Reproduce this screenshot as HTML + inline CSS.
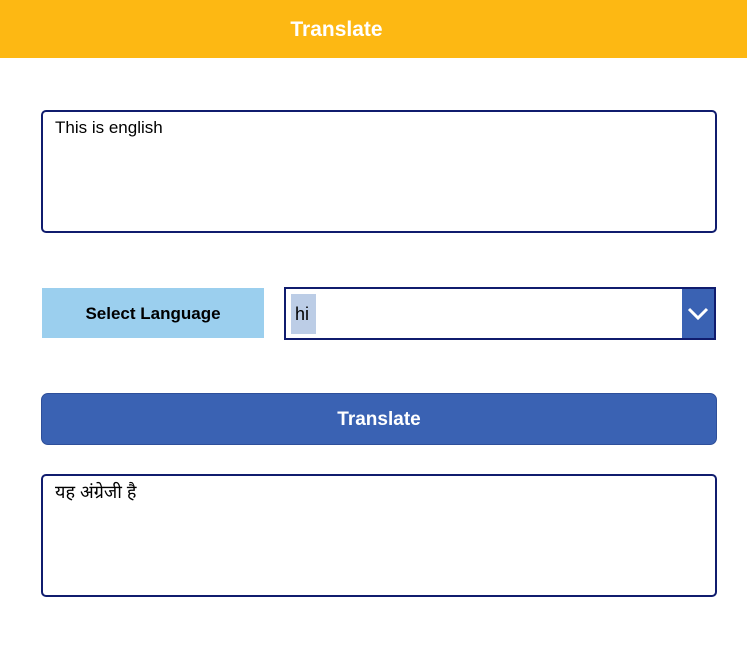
<!DOCTYPE html>
<html><head><meta charset="utf-8"><style>
body{margin:0;width:747px;height:646px;background:#fff;position:relative;font-family:"Liberation Sans","Noto Sans CJK SC",sans-serif;overflow:hidden}
.hdr{position:absolute;left:0;top:0;width:747px;height:58px;background:#fdb813;color:#fff;font-weight:bold;font-size:21px;line-height:60px;text-align:center;box-sizing:border-box;padding-right:74px}
.box{position:absolute;left:41px;width:676px;height:123px;border:2px solid #101c6e;border-radius:5px;box-sizing:border-box;padding:6px 12px;font-size:17px;color:#000}
.lbl{position:absolute;left:42px;top:288px;width:222px;height:50px;background:#9bcfee;font-weight:bold;font-size:17px;line-height:52px;text-align:center}
.dd{position:absolute;left:284px;top:287px;width:432px;height:53px;border:2px solid #101c6e;box-sizing:border-box}
.hl{position:absolute;left:5px;top:5px;width:25px;height:40px;background:#bccde6;font-size:18px;line-height:40px;padding-left:4px;box-sizing:border-box}
.chev{position:absolute;right:0;top:0;width:32px;height:49px;background:#3a62b3}
.btn{position:absolute;left:41px;top:393px;width:676px;height:52px;background:#3a62b3;border-radius:7px;border:1px solid #2e4f9a;box-sizing:border-box;color:#fff;font-weight:bold;font-size:19px;line-height:52px;text-align:center}
</style></head><body>
<div class="hdr">Translate</div>
<div class="box" style="top:110px">This is english</div>
<div class="lbl">Select Language</div>
<div class="dd"><div class="hl">hi</div><div class="chev"><svg width="32" height="49"><path d="M7 20 L16 29 L25 20" stroke="#fff" stroke-width="3" fill="none"/></svg></div></div>
<div class="btn">Translate</div>
<div class="box" style="top:474px;padding-top:4px;font-size:18px">यह अंग्रेजी है</div>
</body></html>
